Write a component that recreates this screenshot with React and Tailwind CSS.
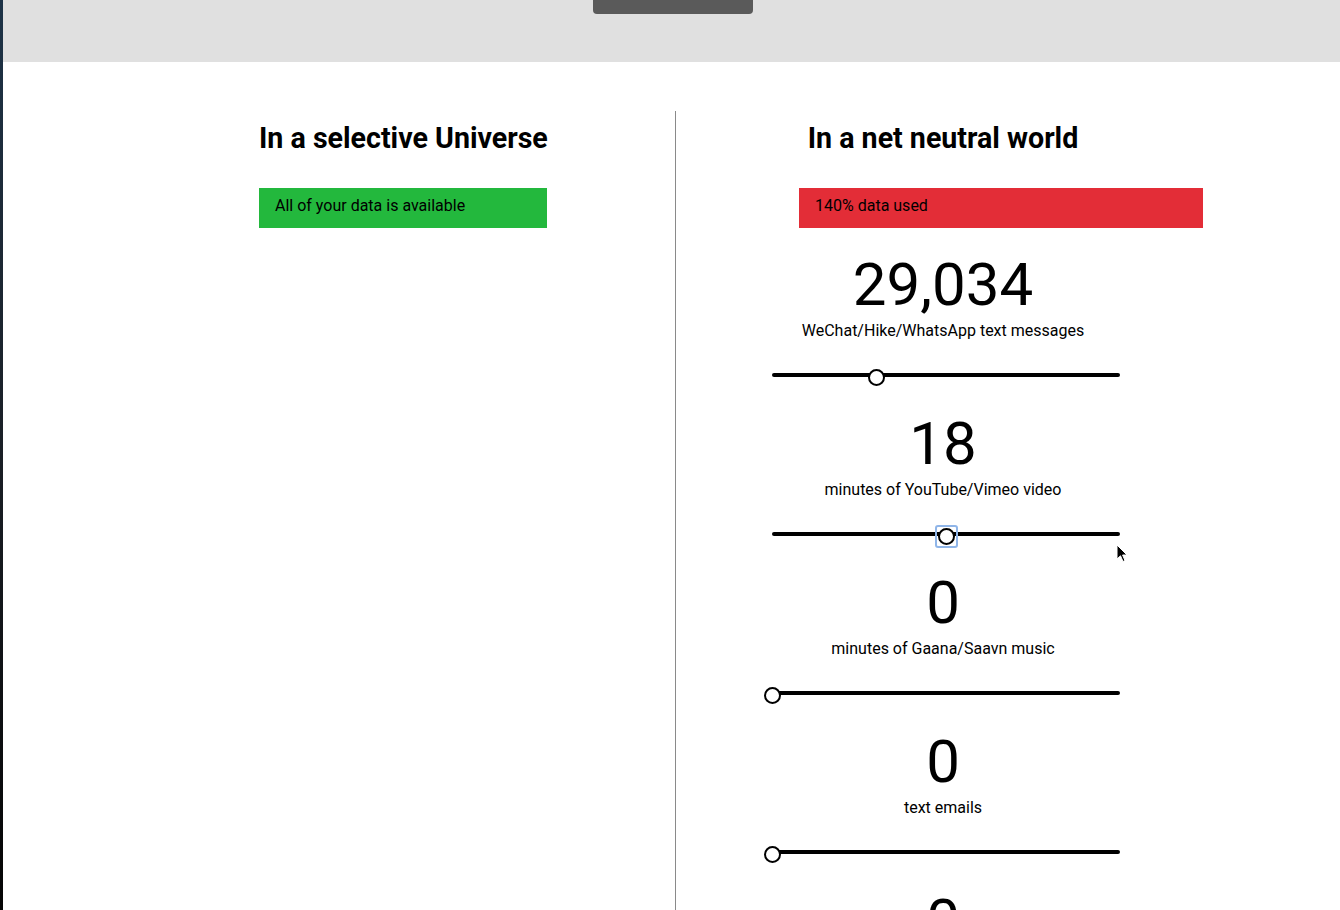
import React from "react";

const usage = [
  { value: "29,034", label: "WeChat/Hike/WhatsApp text messages", pct: 0.3 },
  { value: "18", label: "minutes of YouTube/Vimeo video", pct: 0.5, focused: true },
  { value: "0", label: "minutes of Gaana/Saavn music", pct: 0 },
  { value: "0", label: "text emails", pct: 0 },
  { value: "0", label: "photos on Instagram", pct: 0 },
];

function Slider({ pct, focused }) {
  const left = pct * 348;
  return (
    <div className="relative h-6 pt-[10px] ml-[9px] w-[348px]">
      <div className="h-1 bg-black rounded-full" />
      {focused ? (
        <div
          className="absolute top-[3px] w-[23px] h-[23px] border-2 border-[#8fb5e8] rounded-[3px] flex items-center justify-center"
          style={{ left: left - 11.5 }}
        >
          <div className="w-[17px] h-[17px] rounded-full bg-white border-2 border-black" />
        </div>
      ) : (
        <div
          className="absolute top-[6px] w-[17px] h-[17px] rounded-full bg-white border-2 border-black"
          style={{ left: left - 8.5 }}
        />
      )}
    </div>
  );
}

function Cursor() {
  return (
    <svg className="absolute left-[1116px] top-[544px]" width="13" height="20" viewBox="0 0 13 20">
      <path d="M1 1 L1 15 L4.5 11.8 L7 17.5 L9 16.6 L6.6 11 L11 11 Z" fill="#000" stroke="#fff" strokeWidth="1" strokeLinejoin="round" />
    </svg>
  );
}

export default function App() {
  return (
    <div className="relative flex h-[910px] overflow-hidden bg-white text-black font-['Roboto','Liberation_Sans',sans-serif]">
      <div className="w-[3px] shrink-0 bg-gradient-to-b from-[#1d3347] via-[#1a1f26] to-[#050505]" />
      <div className="flex-1 flex flex-col">
        <div className="h-[62px] bg-[#e0e0e0] relative shrink-0">
          <div className="absolute left-[590px] top-0 w-[160px] h-[14px] bg-[#5a5a5a] rounded-b-[4px]" />
        </div>

        <div className="flex flex-1 mt-[49px]">
          <div className="w-[673px] shrink-0 border-r border-[#8a8a8a] pl-[256px]">
            <h2 className="mt-[11px] text-[28.6px] leading-[33px] font-bold">In a selective Universe</h2>
            <div className="mt-[33px] w-[288px] h-[40px] bg-[#23b83d] pl-4 pb-1 flex items-center text-base">
              All of your data is available
            </div>
          </div>

          <div className="flex-1">
            <h2 className="mt-[11px] ml-[87px] w-[360px] text-center text-[28.6px] leading-[33px] font-bold">
              In a net neutral world
            </h2>
            <div className="mt-[33px] ml-[123px] w-[404px] h-[40px] bg-[#e32d37] pl-4 pb-1 flex items-center text-base">
              140% data used
            </div>
            <div className="ml-[87px] w-[360px] mt-[25px] flex flex-col gap-[25px]">
              {usage.map((u, i) => (
                <div key={i} className="flex flex-col">
                  <div className="text-center text-[60px] leading-[64px] h-[64px]">{u.value}</div>
                  <div className="mt-[4px] text-center text-base leading-5">{u.label}</div>
                  <div className="mt-[22px]">
                    <Slider pct={u.pct} focused={u.focused} />
                  </div>
                </div>
              ))}
            </div>
          </div>
        </div>
      </div>
      <Cursor />
    </div>
  );
}
